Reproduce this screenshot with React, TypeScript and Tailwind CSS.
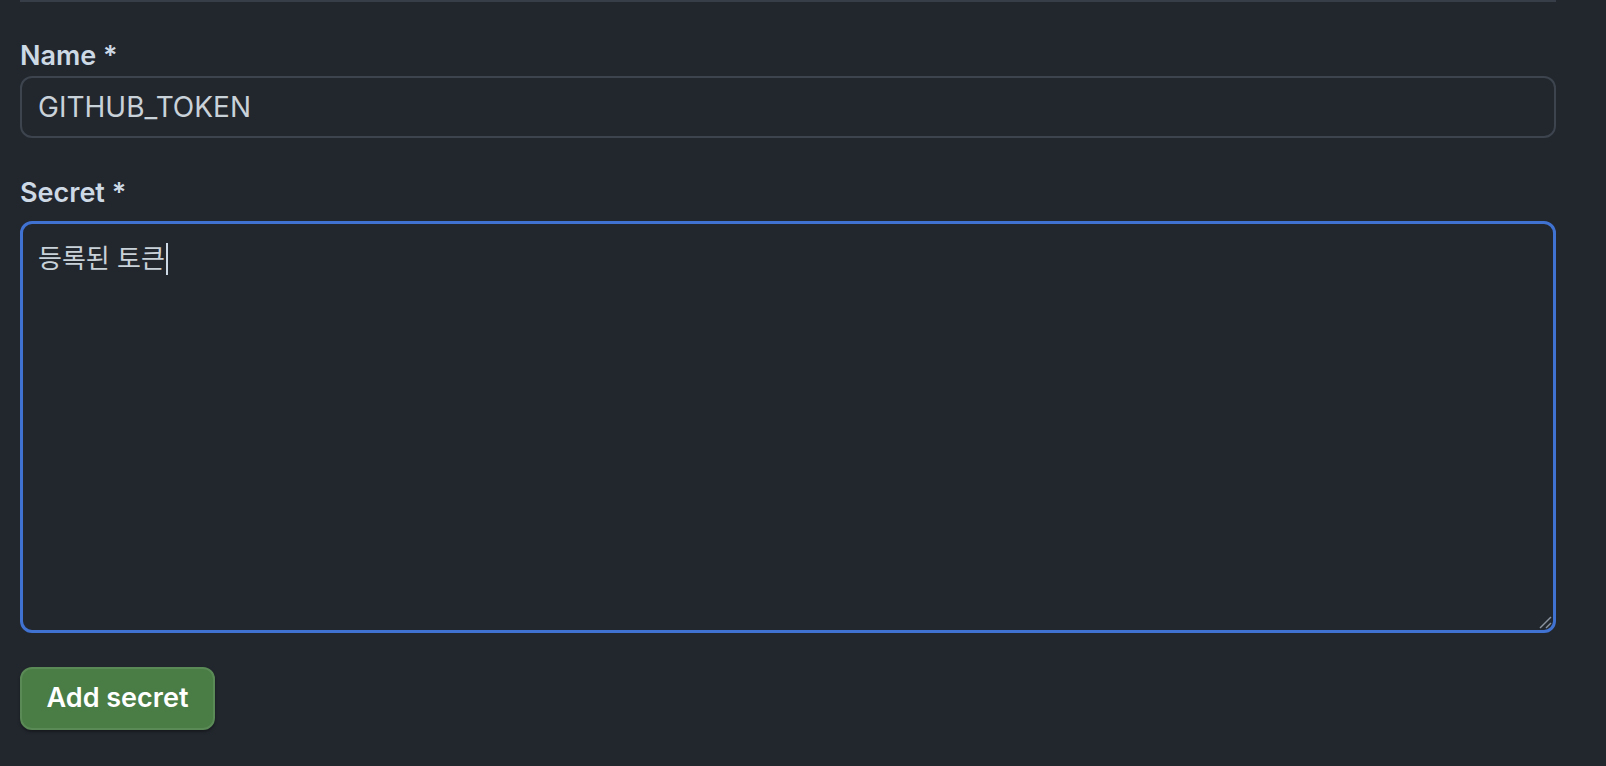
import React from "react";

export default function App() {
  const font = { fontFamily: 'Inter, "Noto Sans CJK KR", sans-serif' };
  return (
    <div className="w-full h-[766px] bg-[#22272e] px-[20px] overflow-hidden" style={font}>
      <div className="w-[1536px]">
        <div className="h-[2px] bg-[#373e47]" />
        <label className="block mt-[36px] text-[27px] leading-[36px] font-semibold text-[#cdd9e5]">
          Name *
        </label>
        <div className="mt-[2px] h-[62px] rounded-[12px] border-2 border-[#3d444d] bg-[#22272e] px-[16px] flex items-center text-[28px] text-[#c9d1d9]">
          GITHUB_TOKEN
        </div>
        <label className="block mt-[37px] text-[27px] leading-[36px] font-semibold text-[#cdd9e5]">
          Secret *
        </label>
        <div className="relative mt-[10px] h-[412px] rounded-[12px] border-[3px] border-[#4072d1] bg-[#22272e] px-[15px] pt-[17px]">
          <div className="text-[26px] leading-[36px] text-[#c9d1d9] flex items-center">
            <span>등록된 토큰</span>
            <span className="inline-block w-[2px] h-[32px] bg-[#cdd9e5] ml-[1px]" />
          </div>
          <svg className="absolute right-[1px] bottom-[1px]" width="14" height="14" viewBox="0 0 14 14">
            <line x1="2" y1="13" x2="13" y2="2" stroke="#8b949e" strokeWidth="1.5" />
            <line x1="8" y1="13" x2="13" y2="8" stroke="#8b949e" strokeWidth="1.5" />
          </svg>
        </div>
        <button className="mt-[34px] h-[63px] w-[195px] rounded-[12px] bg-[#4a7c46] border-2 border-[#5a8a55] text-white text-[27px] font-semibold shadow-[0_2px_3px_rgba(0,0,0,0.35)]">
          Add secret
        </button>
      </div>
    </div>
  );
}
